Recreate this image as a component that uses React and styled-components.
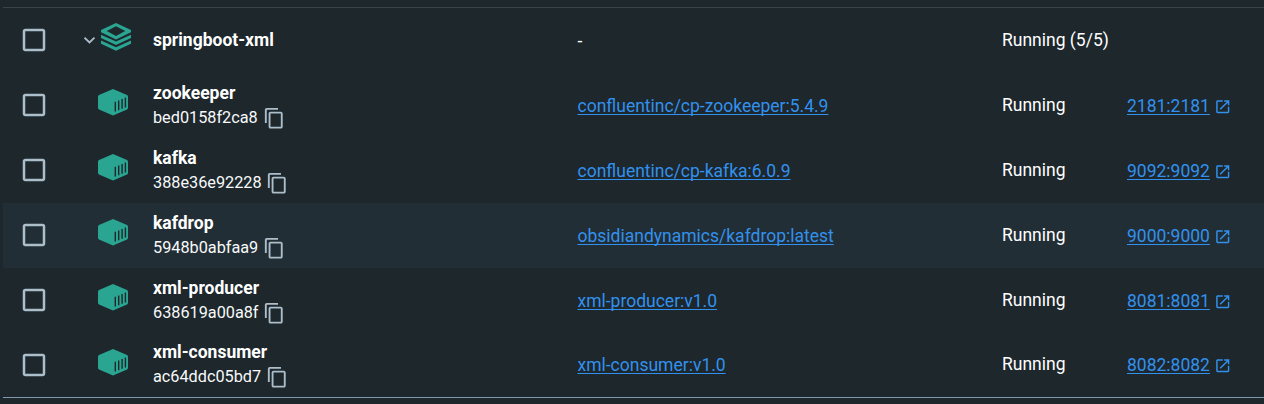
import React from 'react';
import styled, { createGlobalStyle } from 'styled-components';

const GlobalStyle = createGlobalStyle`
  *, *::before, *::after { box-sizing: border-box; }
  body {
    margin: 0;
    background: #1d272c;
    color: #fff;
    font-family: Roboto, "Liberation Sans", sans-serif;
    overflow: hidden;
  }
  svg { display: block; flex: none; }
`;

const Page = styled.main`
  height: 404px;
  padding: 7px 0 0 3px;
  background: #1d272c;
`;

const Table = styled.div`
  border-top: 1px solid #37434a;
  border-bottom: 1px solid #8098ad;
`;

const Row = styled.div`
  display: grid;
  grid-template-columns: 78px 72px 424.5px 424.5px 125px 1fr;
  height: ${({ $last }) => ($last ? 64 : 65)}px;
  background: ${({ $active }) => ($active ? '#222e35' : 'transparent')};
`;

const CheckCell = styled.div`
  padding: 17px 0 0 16px;
  color: #adbecb;
`;

const GroupIconCell = styled.div`
  display: flex;
  align-items: flex-start;
  gap: 5px;
  padding: 15px 0 0 3px;
  color: #adbecb;
`;

const ContainerIconCell = styled.div`
  padding: 16px 0 0 17px;
`;

const NameCell = styled.div`
  padding-top: ${({ $top = 10 }) => $top}px;
`;

const Name = styled.div`
  font-size: 17.5px;
  line-height: 20px;
  font-weight: 700;
`;

const IdLine = styled.div`
  display: flex;
  gap: 4.8px;
  margin-top: 4px;
  color: #adbecb;
`;

const ContainerId = styled.span`
  font-size: 16.25px;
  line-height: 22px;
  color: #f8f9fa;
`;

const Cell = styled.div`
  padding-top: ${({ $top = 22 }) => $top}px;
  font-size: 17.5px;
  line-height: 20px;
  white-space: nowrap;
`;

const PortCell = styled(Cell)`
  display: flex;
  gap: 4px;
  color: #3291ee;
`;

const Link = styled.a`
  color: #3291ee;
  text-decoration: underline;
  text-decoration-thickness: 1px;
  text-underline-offset: 2px;
  text-decoration-skip-ink: none;
`;

const OpenMark = styled.span`
  padding-top: 2px;
`;

const Checkbox = () => (
  <svg width="30" height="30" viewBox="0 0 24 24" fill="currentColor">
    <path d="M19 5v14H5V5h14m0-2H5c-1.1 0-2 .9-2 2v14c0 1.1.9 2 2 2h14c1.1 0 2-.9 2-2V5c0-1.1-.9-2-2-2z" />
  </svg>
);

const Chevron = () => (
  <svg width="12" height="34" viewBox="0 0 12 34" fill="none" stroke="currentColor" strokeWidth="1.8">
    <path d="M.5 14.7 5.5 19.5l5-4.8" />
  </svg>
);

const StackIcon = () => (
  <svg width="30" height="28" viewBox="0 0 30 28" fill="#2aa592">
    <path fillRule="evenodd" d="M15 0 30 7v2.3L15 16.5 0 9.3V7L15 0Zm0 3.3L5.8 8.1 15 12.9l9.2-4.8L15 3.3Z" />
    <path d="M0 11.7 15 18.5l15-6.8v3.4l-15 7-15-7v-3.4Z" />
    <path d="M0 17.5 15 24.3l15-6.8v3.3L15 27.8 0 20.8v-3.3Z" />
  </svg>
);

const ContainerIcon = () => (
  <svg width="30" height="27" viewBox="0 0 30 27">
    <path d="M15 0 29 6q1 .5 1 1.6v11.2q0 1.1-1 1.6l-14 6-14-6q-1-.5-1-1.6V7.6Q0 6.5 1 6Z" fill="#2aa592" />
    <path d="M17.3 12.8v9.8M20.700 11.400v9.800M24.100 10v9.800M27.400 8.600v9.800" stroke="#1d272c" strokeWidth="1.4" />
  </svg>
);

const CopyIcon = () => (
  <svg width="22.5" height="22.5" viewBox="0 0 24 24" fill="currentColor">
    <path d="M16 1H4c-1.1 0-2 .9-2 2v14h2V3h12V1zm3 4H8c-1.1 0-2 .9-2 2v14c0 1.1.9 2 2 2h11c1.1 0 2-.9 2-2V7c0-1.1-.9-2-2-2zm0 16H8V7h11v14z" />
  </svg>
);

const OpenIcon = () => (
  <svg width="17.5" height="17.5" viewBox="0 0 24 24" fill="currentColor">
    <path d="M19 19H5V5h7V3H5c-1.11 0-2 .9-2 2v14c0 1.1.89 2 2 2h14c1.1 0 2-.9 2-2v-7h-2v7zM14 3v2h3.59l-9.83 9.83 1.41 1.41L19 6.41V10h2V3h-7z" />
  </svg>
);

const containers = [
  { name: 'zookeeper', id: 'bed0158f2ca8', image: 'confluentinc/cp-zookeeper:5.4.9', port: '2181:2181' },
  { name: 'kafka', id: '388e36e92228', image: 'confluentinc/cp-kafka:6.0.9', port: '9092:9092' },
  { name: 'kafdrop', id: '5948b0abfaa9', image: 'obsidiandynamics/kafdrop:latest', port: '9000:9000', active: true },
  { name: 'xml-producer', id: '638619a00a8f', image: 'xml-producer:v1.0', port: '8081:8081' },
  { name: 'xml-consumer', id: 'ac64ddc05bd7', image: 'xml-consumer:v1.0', port: '8082:8082' },
];

export default function App() {
  return (
    <Page>
      <GlobalStyle />
      <Table>
        <Row>
          <CheckCell><Checkbox /></CheckCell>
          <GroupIconCell><Chevron /><StackIcon /></GroupIconCell>
          <NameCell $top={22}><Name>springboot-xml</Name></NameCell>
          <Cell $top={23}>-</Cell>
          <Cell>Running (5/5)</Cell>
        </Row>
        {containers.map((c, i) => {
          const last = i === containers.length - 1;
          return (
            <Row key={c.id} $active={c.active} $last={last}>
              <CheckCell><Checkbox /></CheckCell>
              <ContainerIconCell><ContainerIcon /></ContainerIconCell>
              <NameCell $top={last ? 9 : 10}>
                <Name>{c.name}</Name>
                <IdLine><ContainerId>{c.id}</ContainerId><CopyIcon /></IdLine>
              </NameCell>
              <Cell $top={last ? 22 : 23}><Link>{c.image}</Link></Cell>
              <Cell $top={last ? 21 : 22}>Running</Cell>
              <PortCell $top={last ? 22 : 23}>
                <Link>{c.port}</Link>
                <OpenMark><OpenIcon /></OpenMark>
              </PortCell>
            </Row>
          );
        })}
      </Table>
    </Page>
  );
}
